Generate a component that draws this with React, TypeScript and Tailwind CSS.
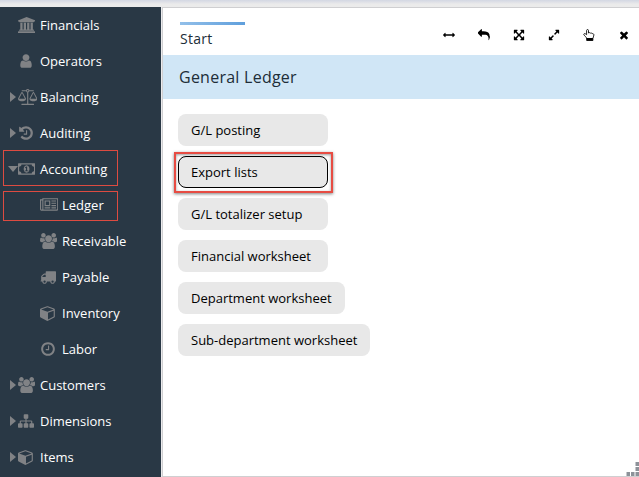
import type { ReactNode } from 'react';

type Glyph = { w: number; d: string };

const glyphs: Record<string, Glyph> = {
  bank: { w: 1920, d: 'M960 0l960 384v128h-128q0 26-20.5 45t-48.5 19h-1526q-28 0-48.5-19t-20.5-45h-128v-128zm-704 640h256v768h128v-768h256v768h128v-768h256v768h128v-768h256v768h59q28 0 48.5 19t20.5 45v64h-1664v-64q0-26 20.5-45t48.5-19h59v-768zm1595 960q28 0 48.5 19t20.5 45v128h-1920v-128q0-26 20.5-45t48.5-19h1782z' },
  user: { w: 1792, d: 'M1536 1399q0 109-62.5 187t-150.5 78h-854q-88 0-150.5-78t-62.5-187q0-85 8.5-160.5t31.5-152 58.5-131 94-89 134.5-34.5q131 128 313 128t313-128q76 0 134.5 34.5t94 89 58.5 131 31.5 152 8.5 160.5zm-256-887q0 159-112.5 271.5t-271.5 112.5-271.5-112.5-112.5-271.5 112.5-271.5 271.5-112.5 271.5 112.5 112.5 271.5z' },
  scale: { w: 2176, d: 'M1728 448l-330 640h660zm-1280 0l-330 640h660zm820-192q-14 40-45.5 71t-70.5 45v1292h608q14 0 23 9t9 23v64q0 14-9 23t-23 9h-1344q-14 0-23-9t-9-23v-64q0-14 9-23t23-9h608v-1292q-40-14-71-45t-45-71h-460q-14 0-23-9t-9-23v-64q0-14 9-23t23-9h460q21-57 71-92.5t109-35.5 109 35.5 71 92.5h460q14 0 23 9t9 23v64q0 14-9 23t-23 9h-460zm-180 16q33 0 56.5-23.5t23.5-56.5-23.5-56.5-56.5-23.5-56.5 23.5-23.5 56.5 23.5 56.5 56.5 23.5zm1088 816q0 73-46.5 131t-117.5 91-144.5 49.5-139.5 16.5-139.5-16.5-144.5-49.5-117.5-91-46.5-131q0-11 35-81t92-174.5 107-195.5 102-184 56-100q18-33 56-33t56 33q4 7 56 100t102 184 107 195.5 92 174.5 35 81zm-1280 0q0 73-46.5 131t-117.5 91-144.5 49.5-139.5 16.5-139.5-16.5-144.5-49.5-117.5-91-46.5-131q0-11 35-81t92-174.5 107-195.5 102-184 56-100q18-33 56-33t56 33q4 7 56 100t102 184 107 195.5 92 174.5 35 81z' },
  history: { w: 1792, d: 'M1664 896q0 156-61 298t-164 245-245 164-298 61q-172 0-327-72.5t-264-204.5q-7-10-6.5-22.5t8.5-20.5l137-138q10-9 25-9 16 2 23 12 73 95 179 147t225 52q104 0 198.5-40.5t163.5-109.5 109.5-163.5 40.5-198.5-40.5-198.5-109.5-163.5-163.5-109.5-198.5-40.5q-98 0-188 35.5t-160 101.5l137 138q31 30 14 69-17 40-59 40h-448q-26 0-45-19t-19-45v-448q0-42 40-59 39-17 69 14l130 129q107-101 244.5-156.5t284.5-55.5q156 0 298 61t245 164 164 245 61 298zm-640-288v448q0 14-9 23t-23 9h-320q-14 0-23-9t-9-23v-64q0-14 9-23t23-9h224v-352q0-14 9-23t23-9h64q14 0 23 9t9 23z' },
  money: { w: 1920, d: 'M768 1152h384v-96h-128v-448h-114l-148 137 77 80q42-37 55-57h2v288h-128v96zm512-256q0 70-21 142t-59.5 134-101.5 101-138 39-138-39-101.5-101-59.5-134-21-142 21-142 59.5-134 101.5-101 138-39 138 39 101.5 101 59.5 134 21 142zm512 256v-512q-106 0-181-75t-75-181h-1152q0 106-75 181t-181 75v512q106 0 181 75t75 181h1152q0-106 75-181t181-75zm128-832v1152q0 26-19 45t-45 19h-1792q-26 0-45-19t-19-45v-1152q0-26 19-45t45-19h1792q26 0 45 19t19 45z' },
  news: { w: 2048, d: 'M1024 512h-384v384h384v-384zm128 640v128h-640v-128h640zm0-768v640h-640v-640h640zm640 768v128h-512v-128h512zm0-256v128h-512v-128h512zm0-256v128h-512v-128h512zm0-256v128h-512v-128h512zm-1536 960v-960h-128v960q0 26 19 45t45 19 45-19 19-45zm1664 0v-1088h-1536v1088q0 33-11 64h1483q26 0 45-19t19-45zm128-1216v1216q0 80-56 136t-136 56h-1664q-80 0-136-56t-56-136v-1088h256v-128h1792z' },
  users: { w: 1920, d: 'M593 896q-162 5-265 128h-134q-82 0-138-40.5t-56-118.5q0-353 124-353 6 0 43.5 21t97.5 42.5 119 21.5q67 0 133-23-5 37-5 66 0 159 93 256zm1071 637q0 120-73 189.5t-194 69.5h-874q-121 0-194-69.5t-73-189.5q0-53 3.5-103.5t14-109 26.5-108.5 43-97.5 62-81 85.5-53.5 111.5-20q10 0 43 21.5t73 48 107 48 135 21.5 135-21.5 107-48 73-48 43-21.5q61 0 111.5 20t85.5 53.5 62 81 43 97.5 26.5 108.5 14 109 3.5 103.5zm-1024-1277q0 106-75 181t-181 75-181-75-75-181 75-181 181-75 181 75 75 181zm704 384q0 159-112.5 271.5t-271.5 112.5-271.5-112.5-112.5-271.5 112.5-271.5 271.5-112.5 271.5 112.5 112.5 271.5zm576 225q0 78-56 118.5t-138 40.5h-134q-103-123-265-128 93-97 93-256 0-29-5-66 66 23 133 23 59 0 119-21.5t97.5-42.5 43.5-21q124 0 124 353zm-128-609q0 106-75 181t-181 75-181-75-75-181 75-181 181-75 181 75 75 181z' },
  truck: { w: 1792, d: 'M640 1408q0-52-38-90t-90-38-90 38-38 90 38 90 90 38 90-38 38-90zm-384-512h384v-256h-158q-13 0-22 9l-195 195q-9 9-9 22v30zm1280 512q0-52-38-90t-90-38-90 38-38 90 38 90 90 38 90-38 38-90zm256-1088v1024q0 15-4 26.5t-13.5 18.5-16.5 11.5-23.5 6-22.5 2-25.5 0-22.5-.5q0 106-75 181t-181 75-181-75-75-181h-384q0 106-75 181t-181 75-181-75-75-181h-64q-3 0-22.5.5t-25.5 0-22.5-2-23.5-6-16.5-11.5-13.5-18.5-4-26.5q0-26 19-45t45-19v-320q0-8-.5-35t0-38 2.5-34.5 6.5-37 14-30.5 22.5-30l198-198q19-19 50.5-32t58.5-13h160v-192q0-26 19-45t45-19h1024q26 0 45 19t19 45z' },
  cube: { w: 1664, d: 'M896 1629l640-349v-636l-640 233v752zm-64-865l698-254-698-254-698 254zm832-252v768q0 35-18 65t-49 47l-704 384q-28 16-61 16t-61-16l-704-384q-31-17-49-47t-18-65v-768q0-40 23-73t61-47l704-256q22-8 44-8t44 8l704 256q38 14 61 47t23 73z' },
  clock: { w: 1792, d: 'M1024 544v448q0 14-9 23t-23 9h-320q-14 0-23-9t-9-23v-64q0-14 9-23t23-9h224v-352q0-14 9-23t23-9h64q14 0 23 9t9 23zm416 352q0-148-73-273t-198-198-273-73-273 73-198 198-73 273 73 273 198 198 273 73 273-73 198-198 73-273zm224 0q0 209-103 385.5t-279.5 279.5-385.5 103-385.5-103-279.5-279.5-103-385.5 103-385.5 279.5-279.5 385.5-103 385.5 103 279.5 279.5 103 385.5z' },
  sitemap: { w: 1792, d: 'M1792 1248v320q0 40-28 68t-68 28h-320q-40 0-68-28t-28-68v-320q0-40 28-68t68-28h96v-192h-512v192h96q40 0 68 28t28 68v320q0 40-28 68t-68 28h-320q-40 0-68-28t-28-68v-320q0-40 28-68t68-28h96v-192h-512v192h96q40 0 68 28t28 68v320q0 40-28 68t-68 28h-320q-40 0-68-28t-28-68v-320q0-40 28-68t68-28h96v-192q0-52 38-90t90-38h512v-192h-96q-40 0-68-28t-28-68v-320q0-40 28-68t68-28h320q40 0 68 28t28 68v320q0 40-28 68t-68 28h-96v192h512q52 0 90 38t38 90v192h96q40 0 68 28t28 68z' },
  reply: { w: 1792, d: 'M1792 1120q0 166-127 451-3 7-10.5 24t-13.5 30-13 22q-12 17-28 17-15 0-23.5-10t-8.5-25q0-9 2.5-26.5t2.5-23.5q5-68 5-123 0-112-19.5-200.5t-54-153.5-89-112-117.5-78.5-149.5-45-179-19.5-166-6h-224v256q0 26-19 45t-45 19-45-19l-512-512q-19-19-19-45t19-45l512-512q19-19 45-19t45 19 19 45v256h224q713 0 875 403 53 134 53 333z' },
  arrowsH: { w: 1792, d: 'M1792 896q0 26-19 45l-256 256q-19 19-45 19t-45-19-19-45v-128h-1024v128q0 26-19 45t-45 19-45-19l-256-256q-19-19-19-45t19-45l256-256q19-19 45-19t45 19 19 45v128h1024v-128q0-26 19-45t45-19 45 19l256 256q19 19 19 45z' },
  arrowsAlt: { w: 1792, d: 'M1411 541l-355 355 355 355 144-144q29-31 70-14 39 17 39 59v448q0 26-19 45t-45 19h-448q-42 0-59-40-17-39 14-69l144-144-355-355-355 355 144 144q31 30 14 69-17 40-59 40h-448q-26 0-45-19t-19-45v-448q0-42 40-59 39-17 69 14l144 144 355-355-355-355-144 144q-19 19-45 19-12 0-24-5-40-17-40-59v-448q0-26 19-45t45-19h448q42 0 59 40 17 39-14 69l-144 144 355 355 355-355-144-144q-31-30-14-69 17-40 59-40h448q26 0 45 19t19 45v448q0 42-39 59-13 5-25 5-26 0-45-19z' },
  expand: { w: 1792, d: 'M883 1056q0 13-10 23l-332 332 144 144q19 19 19 45t-19 45-45 19h-448q-26 0-45-19t-19-45v-448q0-26 19-45t45-19 45 19l144 144 332-332q10-10 23-10t23 10l114 114q10 10 10 23zm781-864v448q0 26-19 45t-45 19-45-19l-144-144-332 332q-10 10-23 10t-23-10l-114-114q-10-10-10-23t10-23l332-332-144-144q-19-19-19-45t19-45 45-19h448q26 0 45 19t19 45z' },
  close: { w: 1792, d: 'M1490 1322q0 40-28 68l-136 136q-28 28-68 28t-68-28l-294-294-294 294q-28 28-68 28t-68-28l-136-136q-28-28-28-68t28-68l294-294-294-294q-28-28-28-68t28-68l136-136q28-28 68-28t68 28l294 294 294-294q28-28 68-28t68 28l136 136q28 28 28 68t-28 68l-294 294 294 294q28 28 28 68z' },
};

function Icon({ name, size }: { name: string; size: number }) {
  const { w, d } = glyphs[name];
  return (
    <svg className="shrink-0" width={(w / 1792) * size} height={size} viewBox={`0 0 ${w} 1792`} fill="currentColor">
      <path d={d} />
    </svg>
  );
}

function HandUp() {
  return (
    <svg className="shrink-0" width="12" height="12" viewBox="0 0 12 12" fill="none" stroke="currentColor" strokeWidth="0.85" strokeLinejoin="round">
      <path d="M3.600 9.500C3.600 8.200 2.200 7.400 1.100 6.200C.3 5.300 1.100 4.200 2.200 4.700L3.600 5.700V1.500C3.600.2 5.500.2 5.500 1.500V4C6.200 3.400 7.100 3.600 7.300 4.200C8 3.700 8.900 4 9.100 4.700C10 4.400 10.900 4.900 10.900 6C10.900 7.600 9.900 8.300 9.900 9.500Z" />
      <path d="M3.700 9.500H9.900V11.500H3.700Z" fill="currentColor" />
    </svg>
  );
}

type Item = { label: string; icon: string; state?: 'closed' | 'open'; child?: boolean; marked?: boolean };

const items: Item[] = [
  { label: 'Financials', icon: 'bank' },
  { label: 'Operators', icon: 'user' },
  { label: 'Balancing', icon: 'scale', state: 'closed' },
  { label: 'Auditing', icon: 'history', state: 'closed' },
  { label: 'Accounting', icon: 'money', state: 'open', marked: true },
  { label: 'Ledger', icon: 'news', child: true, marked: true },
  { label: 'Receivable', icon: 'users', child: true },
  { label: 'Payable', icon: 'truck', child: true },
  { label: 'Inventory', icon: 'cube', child: true },
  { label: 'Labor', icon: 'clock', child: true },
  { label: 'Customers', icon: 'users', state: 'closed' },
  { label: 'Dimensions', icon: 'sitemap', state: 'closed' },
  { label: 'Items', icon: 'cube', state: 'closed' },
];

function NavItem({ item }: { item: Item }) {
  return (
    <li className={`relative flex h-9 items-center ${item.child ? 'pl-10' : 'pl-2'}`}>
      {item.marked && (
        <span
          className={`absolute left-[3px] w-[115px] border border-[#dd4b41] ${item.child ? 'top-[4px] h-[30px]' : '-top-px h-9'}`}
        />
      )}
      {!item.child && (
        <span className="flex w-[10px] shrink-0 items-center text-[#808285]">
          {item.state === 'closed' && (
            <svg className="ml-[1.500px]" width="6" height="10" viewBox="0 0 6 10" fill="currentColor"><path d="M0 0l6 5L0 10z" /></svg>
          )}
          {item.state === 'open' && (
            <svg className="shrink-0" width="10" height="6" viewBox="0 0 10 6" fill="currentColor"><path d="M0 0h10L5 6z" /></svg>
          )}
        </span>
      )}
      <span className="flex w-[22px] shrink-0 text-[#808285]"><Icon name={item.icon} size={16} /></span>
      <span className="pt-[2px]">{item.label}</span>
    </li>
  );
}

const tools: ReactNode[] = [
  <Icon name="arrowsH" size={12} />,
  <Icon name="reply" size={12} />,
  <Icon name="arrowsAlt" size={12} />,
  <Icon name="expand" size={12} />,
  <HandUp />,
  <Icon name="close" size={12} />,
];

const actions = ['G/L posting', 'Export lists', 'G/L totalizer setup', 'Financial worksheet', 'Department worksheet', 'Sub-department worksheet'];

export default function App() {
  return (
    <div className="flex h-[477px] w-[639px] flex-col overflow-hidden bg-[#ebebed] font-['Open_Sans','Noto_Sans',sans-serif] text-[13px]">
      <div className="h-[7px] shrink-0 bg-linear-to-b from-[#d3d7e3] to-[#ebebeb] to-60%" />
      <div className="flex h-[470px]">
        <nav className="w-[161px] shrink-0 bg-[#293845] font-medium text-white">
          <ul>{items.map((item) => <NavItem key={item.label} item={item} />)}</ul>
        </nav>
        <main className="relative ml-px flex grow flex-col border-t border-b border-l border-[#cfcfd1] bg-white">
          <header className="flex h-[47px] shrink-0 justify-between pl-[17px]">
            <div className="mt-[14px] w-[65px]">
              <div className="h-[3px] bg-linear-to-r from-[#92bfe9] to-[#5f9fdc]" />
              <div className="mt-1 text-sm leading-5 tracking-[0.3px] text-[#202d38]">Start</div>
            </div>
            <div className="mt-[21px] flex h-3 gap-[23px] pr-[9px] text-black">
              {tools.map((tool, i) => <span key={i} className="flex w-3 justify-center">{tool}</span>)}
            </div>
          </header>
          <h1 className="flex h-11 shrink-0 items-center bg-[#d0e6f6] pl-4 text-base font-medium tracking-[0.25px] text-[#202d38]">General Ledger</h1>
          <div className="flex flex-col items-start gap-[10px] pt-[15px] pl-[15px] text-black">
            {actions.map((label) => (
              <button
                key={label}
                className={`relative h-8 min-w-[150px] rounded-lg bg-[#e8e8e8] px-[13px] pt-[2px] text-left ${label === 'Export lists' ? 'outline-1 -outline-offset-1 outline-black' : ''}`}
              >
                {label}
                {label === 'Export lists' && (
                  <span className="absolute -top-[4px] -left-[4px] h-[41px] w-[159px] border-2 border-[#e74c43] shadow-[0_1px_3px_rgba(0,0,0,0.5),inset_0_1px_3px_rgba(0,0,0,0.4)]" />
                )}
              </button>
            ))}
          </div>
          <svg className="absolute right-0 bottom-0" width="13" height="14" fill="#8d9299">
            <path d="M9.500 0h3.500v4H9.500zM9.500 5h3.500v4H9.500zM9.500 10h3.500v4H9.500zM5 10h3.500v4H5zM.5 10h3.500v4H.5z" />
          </svg>
        </main>
      </div>
    </div>
  );
}
